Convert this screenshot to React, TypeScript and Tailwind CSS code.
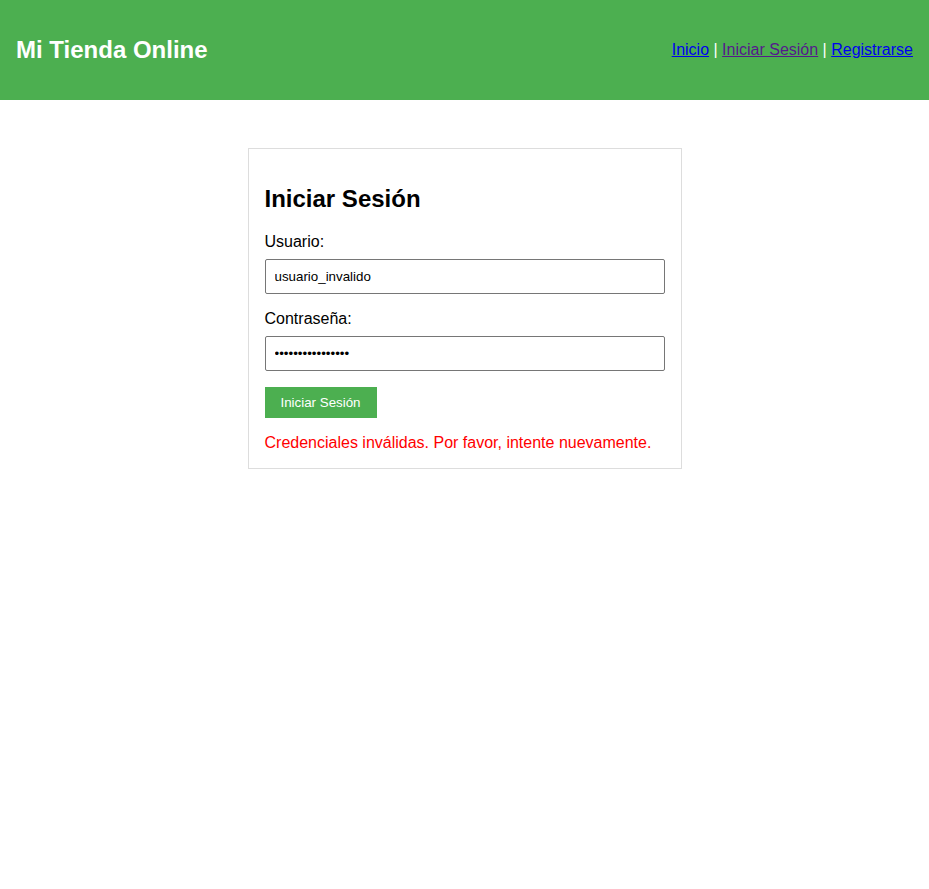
export default function App() {
  return (
    <div className="min-h-[889px] bg-white font-['Liberation_Sans',Arial,sans-serif] text-black">
      <header className="flex h-[100px] items-center justify-between bg-[#4CAF50] px-4 text-white">
        <h1 className="text-[24px] font-bold leading-[28px]">Mi Tienda Online</h1>
        <nav className="text-[16px]">
          <a href="#" className="text-[#0000EE] underline">Inicio</a>
          {' | '}
          <a href="#" className="text-[#551A8B] underline">Iniciar Sesión</a>
          {' | '}
          <a href="#" className="text-[#0000EE] underline">Registrarse</a>
        </nav>
      </header>
      <main className="mx-auto mt-12 w-[434px] border border-[#ddd] px-4 pt-4 pb-4">
        <h2 className="mt-[20px] mb-[20px] text-[24px] font-bold leading-[28px]">Iniciar Sesión</h2>
        <form onSubmit={(e) => e.preventDefault()}>
          <label className="mb-2 block text-[16px] leading-[18px]">Usuario:</label>
          <input
            type="text"
            defaultValue="usuario_invalido"
            className="mb-4 block h-[35px] w-[400px] rounded-[2px] border border-[#767676] pr-2 pl-[9px] text-[13.33px]"
          />
          <label className="mb-2 block text-[16px] leading-[18px]">Contraseña:</label>
          <input
            type="password"
            defaultValue="contrasena_wrong"
            className="mb-4 block h-[35px] w-[400px] rounded-[2px] border border-[#767676] pr-2 pl-[9px] text-[13.33px]"
          />
          <button
            type="submit"
            className="h-[31px] bg-[#4CAF50] px-4 text-[13.33px] text-white"
          >
            Iniciar Sesión
          </button>
        </form>
        <p className="mt-4 text-[16px] leading-[18px] text-[#ff0000]">
          Credenciales inválidas. Por favor, intente nuevamente.
        </p>
      </main>
    </div>
  )
}
